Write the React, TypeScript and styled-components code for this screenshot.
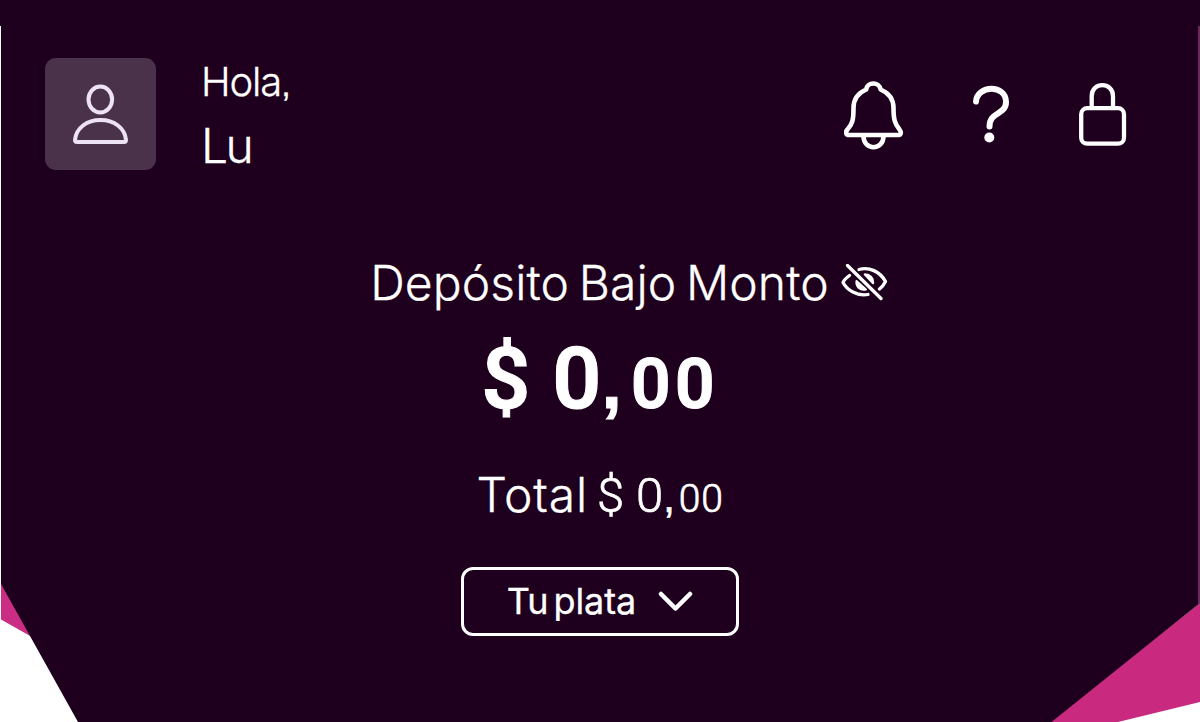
import styled, { createGlobalStyle } from 'styled-components';

const GlobalStyle = createGlobalStyle`
  * {
    box-sizing: border-box;
  }

  body {
    margin: 0;
    background: #fff;
    font-family: Inter, 'Open Sans', sans-serif;
  }
`;

const Screen = styled.main`
  position: relative;
  display: flex;
  flex-direction: column;
  height: 722px;
  overflow: hidden;
  color: #fff;
`;

const Backdrop = styled.svg`
  position: absolute;
  inset: 0;
  z-index: -1;
`;

const Header = styled.header`
  display: flex;
  align-items: flex-start;
  padding: 58px 73px 0 45px;
`;

const Avatar = styled.div`
  width: 111px;
  height: 112px;
  border-radius: 11px;
  background: #4a334a;
`;

const Greeting = styled.div`
  flex: 1;
  margin: -1px 0 0 44px;
  padding-left: 1px;
`;

const Line = styled.div<{
  $size: number;
  $height: number;
  $track?: number;
  $space?: number;
  $weight?: number;
}>`
  height: ${({ $height }) => $height}px;
  font-size: ${({ $size }) => $size}px;
  font-weight: ${({ $weight = 350 }) => $weight};
  line-height: ${({ $height }) => $height}px;
  letter-spacing: ${({ $track = 0 }) => $track}px;
  word-spacing: ${({ $space = 0 }) => $space}px;
  white-space: nowrap;
  -webkit-text-stroke: 0.3px currentColor;
`;

const Name = styled(Line)`
  margin-top: 9px;
`;

const Comma = styled.span`
  font-family: 'Liberation Sans', Arial, sans-serif;
  font-size: 0.85em;
`;

const Actions = styled.nav`
  display: flex;
  gap: 56px;
  padding-top: 20px;
`;

const IconButton = styled.button`
  display: block;
  padding: 0;
  border: 0;
  background: none;
  color: inherit;
  line-height: 0;
`;

const Account = styled.section`
  display: flex;
  flex-direction: column;
  align-items: center;
`;

const Title = styled.div`
  display: flex;
  align-items: center;
  gap: 12px;
  margin: 77px 0 0 59px;
`;

const Balance = styled.div`
  display: flex;
  align-items: baseline;
  height: 100px;
  margin-top: 16px;
  font-family: Roboto, sans-serif;
  font-size: 86px;
  font-weight: 650;
  line-height: 100px;
  -webkit-text-stroke: 1px currentColor;
`;

const Total = styled(Balance)`
  height: 60px;
  margin-top: 36px;
  font-size: 49px;
  font-weight: 340;
  line-height: 60px;
  -webkit-text-stroke: 0.7px currentColor;
`;

const Part = styled.span<{ $gap?: number; $size?: number; $track?: number }>`
  margin-left: ${({ $gap = 0 }) => $gap}px;
  font-size: ${({ $size }) => ($size ? `${$size}px` : 'inherit')};
  letter-spacing: ${({ $track = 0 }) => $track}px;
`;

const Label = styled(Part)`
  font-family: Inter, sans-serif;
  font-weight: 350;
  -webkit-text-stroke: 0.3px currentColor;
`;

const Selector = styled.button`
  display: flex;
  align-items: center;
  justify-content: center;
  gap: 22px;
  width: 278px;
  height: 69px;
  margin-top: 42px;
  padding: 0 0 1px;
  border: 3px solid #fff;
  border-radius: 12px;
  background: none;
  color: inherit;
  font: inherit;
`;

const stroke = {
  fill: 'none',
  stroke: 'currentColor',
  strokeLinecap: 'round',
  strokeLinejoin: 'round',
} as const;

const App = () => (
  <>
    <GlobalStyle />
    <Screen>
      <Backdrop width="1200" height="722" viewBox="0 0 1200 722">
        <path d="M0 0H1200V722H0z" fill="#fff" />
        <path d="M1 583 32 637 1 619.500z" fill="#cb2c84" />
        <path d="M1200 603V702L1118 722H1050z" fill="#c92a80" />
        <path d="M0 0H1200V603L1051.500 722H78L1 584V26H0z" fill="#1e001e" />
        <path d="M1198 26h2v577l-2 2z" fill="#6b285c" />
      </Backdrop>

      <Header>
        <Avatar>
          <svg width="111" height="112" viewBox="45 58 111 112" {...stroke} stroke="#eee2f5" strokeWidth="4">
            <ellipse cx="100.300" cy="99.500" rx="11.800" ry="12.900" />
            <path d="M77 142H124a2 2 0 0 0 2-2C125 128 114 120 100.500 120S76 128 75 140a2 2 0 0 0 2 2z" />
          </svg>
        </Avatar>
        <Greeting>
          <Line $size={40} $height={50} $track={-1.1}>
            Hola<Comma>,</Comma>
          </Line>
          <Name $size={48} $height={60} $track={-2.5}>Lu</Name>
        </Greeting>
        <Actions>
          <IconButton aria-label="Notificaciones">
            <svg width="60" height="74" viewBox="844 78 60 74" {...stroke} strokeWidth="4.600">
              <path d="M866.200 89.500C867 81.500 879.500 81.500 880.600 89.500C889 93 893.500 99 893.500 108C893.500 120 895 124 899.500 129.500C902 133 900.500 135 898 135H849C846 135 845 132 847.500 129.500C852.500 124 853.500 120 853.500 108C853.500 99 858 93 866.200 89.500z" />
              <path d="M863.500 136C863.500 151 883.500 151 883.500 136" />
            </svg>
          </IconButton>
          <IconButton aria-label="Ayuda">
            <svg width="60" height="74" viewBox="960 78 60 74" {...stroke} strokeWidth="6">
              <path d="M976 101.500C977 85 1006 84 1006 102C1006 115 989.500 111.500 989.500 126.500" />
              <circle cx="989.300" cy="137.500" r="5" fill="currentColor" stroke="none" />
            </svg>
          </IconButton>
          <IconButton aria-label="Bloquear">
            <svg width="51" height="74" viewBox="1076 78 51 74" {...stroke} strokeWidth="4.300">
              <rect x="1081.200" y="108.200" width="42.800" height="35.500" rx="6" />
              <path d="M1091.700 107V96C1091.700 81.500 1113 81.500 1113 96V107" />
            </svg>
          </IconButton>
        </Actions>
      </Header>

      <Account>
        <Title>
          <Line $size={48} $height={60} $track={0.1} $space={-4}>Depósito Bajo Monto</Line>
          <svg width="48" height="38" viewBox="841 264 48 38" {...stroke} strokeWidth="3.300">
            <path d="M849.500 275.500C846 278 844 280 843 282.500C847 290 857 296.500 868 294.500" />
            <path d="M859 269.500C869 266.500 880 271.500 885.500 281.500C884 284.500 882 287 879.500 289" />
            <path d="M847.500 265.500 881 298.500" />
            <path d="M856.500 281C855.500 287 860.500 291 866 289.500z" fill="currentColor" strokeWidth="2" />
            <path d="M865 274.500C870 274.500 873.500 278.500 873 283z" fill="currentColor" strokeWidth="2.500" />
          </svg>
        </Title>
        <Balance>
          <Part>$</Part>
          <Part $gap={22}>0</Part>
          <Comma>,</Comma>
          <Part $gap={9} $size={70} $track={4}>00</Part>
        </Balance>
        <Total>
          <Label $size={48} $track={0.8}>Total</Label>
          <Part $gap={9}>$</Part>
          <Part $gap={12}>0</Part>
          <Comma>,</Comma>
          <Part $gap={4} $size={39} $track={0.7}>00</Part>
        </Total>
        <Selector>
          <Line $size={36} $height={44} $track={-0.1} $space={-5} $weight={370}>Tu plata</Line>
          <svg width="35" height="22" viewBox="658 590 35 22" {...stroke} strokeWidth="4.500">
            <path d="M661 594 675.500 608.500 690 594" />
          </svg>
        </Selector>
      </Account>
    </Screen>
  </>
);

export default App;
